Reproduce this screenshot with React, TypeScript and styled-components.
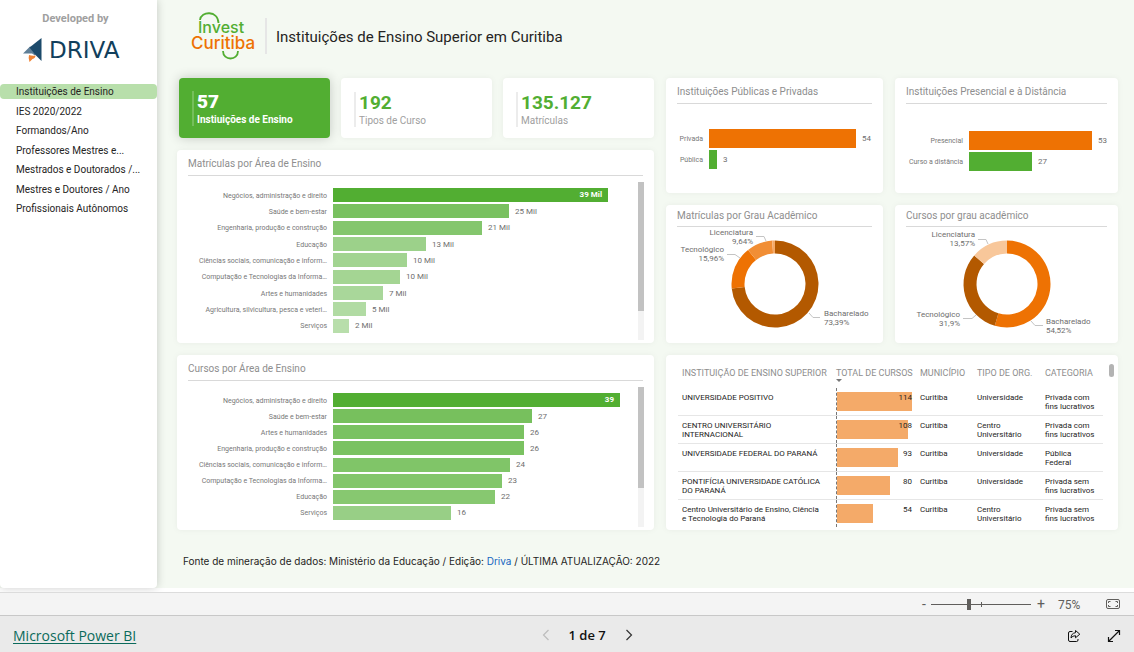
import React from "react";
import styled, { createGlobalStyle } from "styled-components";

const GREEN = "#52ae32";
const ORANGE = "#ee7203";
const BROWN = "#b35900";

const GlobalStyle = createGlobalStyle`
  *, *::before, *::after { box-sizing: border-box; }
  body {
    margin: 0;
    background: #fff;
    color: #252423;
    font-family: Roboto, "Liberation Sans", sans-serif;
    font-size: 10px;
  }
  h1, h2, h3, p, ul { margin: 0; padding: 0; }
  button { font: inherit; color: inherit; background: none; border: 0; padding: 0; cursor: pointer; }
`;

const Page = styled.div`
  display: flex;
  flex-direction: column;
  min-height: 100vh;
`;

const Report = styled.div`
  display: flex;
  flex: 1;
  margin-bottom: 4px;
  background: #f4f9f2;
`;

/* Sidebar */

const Sidebar = styled.aside`
  flex: 0 0 157px;
  background: #fff;
  border-radius: 0 0 4px 4px;
  box-shadow: 0 0 10px rgba(0, 0, 0, 0.2);
`;

const Credit = styled.p`
  padding: 12px 6px 0 0;
  height: 36px;
  line-height: 14px;
  text-align: center;
  font-size: 11px;
  font-weight: 700;
  color: #a0a0a0;
`;

const Brand = styled.div`
  display: flex;
  align-items: center;
  gap: 6px;
  height: 48px;
  padding: 2px 0 22px 23px;
  font-family: "DejaVu Sans", sans-serif;
  font-size: 23px;
  line-height: 24px;
  color: #123f5c;
`;

const Nav = styled.nav`
  display: flex;
  flex-direction: column;
  justify-content: space-between;
  height: 132px;
`;

const NavButton = styled.button<{ $active?: boolean }>`
  height: 15px;
  padding-left: 16px;
  border-radius: 4px;
  text-align: left;
  font-size: 10px;
  line-height: 15px;
  background: ${(p) => (p.$active ? "#b8dfab" : "transparent")};
`;

/* Main area */

const Main = styled.main`
  flex: 1;
  min-width: 0;
  padding: 0 16px 20px 20px;
`;

const Header = styled.header`
  display: flex;
  align-items: center;
  height: 78px;
  padding: 0 0 6px 14px;
`;

const Title = styled.h1`
  margin-left: 7px;
  padding: 2px 0 0 9px;
  border-left: 2px solid #e6e6e6;
  line-height: 34px;
  font-size: 15px;
  font-weight: 400;
`;

const Dashboard = styled.div`
  display: grid;
  grid-template-columns: 477fr 452fr;
  gap: 12px;
`;

const Column = styled.div`
  display: flex;
  flex-direction: column;
  gap: 12px;
`;

const Pair = styled.div`
  display: grid;
  grid-template-columns: 217fr 223fr;
  gap: 12px;
`;

const KpiRow = styled.div`
  display: flex;
  gap: 11px;
  padding-left: 2px;
`;

const Kpi = styled.section<{ $active?: boolean }>`
  display: flex;
  align-items: center;
  flex: 1;
  height: 60px;
  padding: ${(p) => (p.$active ? 0 : 2)}px 0 0 13px;
  border-radius: 4px;
  background: ${(p) => (p.$active ? GREEN : "#fff")};
  color: ${(p) => (p.$active ? "#fff" : "#a0a0a0")};
  box-shadow: 0 0 ${(p) => (p.$active ? "12px rgba(0, 0, 0, 0.2)" : "6px rgba(0, 0, 0, 0.05)")};
`;

const KpiBody = styled.div<{ $active?: boolean }>`
  height: 35px;
  padding-left: 3px;
  border-left: 2px solid ${(p) => (p.$active ? "#75bf5b" : "#ececec")};
  font-size: 10px;
  font-weight: ${(p) => (p.$active ? 700 : 400)};
  line-height: 14px;
`;

const KpiValue = styled.strong<{ $active?: boolean }>`
  display: block;
  font-size: 19px;
  line-height: 22px;
  color: ${(p) => (p.$active ? "#fff" : GREEN)};
`;

const Card = styled.section<{ $height: number }>`
  display: flex;
  flex-direction: column;
  height: ${(p) => p.$height}px;
  padding: 0 11px;
  border-radius: 4px;
  background: #fff;
  box-shadow: 0 0 6px rgba(0, 0, 0, 0.05);
`;

const CardTitle = styled.h2<{ $compact?: boolean }>`
  flex: none;
  height: ${(p) => (p.$compact ? 22 : 26)}px;
  border-bottom: 1px solid #d9d9d9;
  font-size: 10px;
  font-weight: 400;
  line-height: ${(p) => (p.$compact ? 22 : 28)}px;
  color: #8e8e8e;
`;

/* Bar charts */

const ScrollArea = styled.div`
  display: flex;
  flex: 1;
  min-height: 0;
  padding: 6px 0 3px;
  margin-right: -1px;
`;

const Bars = styled.ul`
  display: flex;
  flex-direction: column;
  flex: 1;
  padding: 5px 0 6px;
  list-style: none;
`;

const SmallBars = styled(Bars)<{ $top: number }>`
  flex: none;
  padding: ${(p) => p.$top}px 0 0;
`;

const BarRow = styled.li<{ $row?: number }>`
  display: flex;
  align-items: center;
  flex: ${(p) => (p.$row ? `0 0 ${p.$row}px` : "1")};
  font-size: 8px;
  color: #6e6e6e;
`;

const BarLabel = styled.span<{ $width: number }>`
  flex: 0 0 ${(p) => p.$width}px;
  margin-right: 6px;
  padding-top: 1px;
  text-align: right;
  white-space: nowrap;
  font-size: 7px;
  color: #777;
`;

const Track = styled.div`
  display: flex;
  align-items: center;
  flex: 1;
  gap: 6px;
  white-space: nowrap;
`;

const Bar = styled.div<{ $color: string; $height: number }>`
  flex: none;
  height: ${(p) => p.$height}px;
  padding-right: 6px;
  text-align: right;
  font-weight: 700;
  line-height: ${(p) => p.$height}px;
  color: #fff;
  background: ${(p) => p.$color};
`;

const ScrollTrack = styled.div`
  flex: 0 0 6px;
  background: #f3f3f3;
`;

const ScrollThumb = styled.div<{ $height: number }>`
  height: ${(p) => p.$height}px;
  background: #c2c2c2;
`;

/* Donuts */

const Donut = styled.svg`
  display: block;
  width: calc(100% + 22px);
  height: 115px;
  margin: 0 -11px;
  font-size: 8px;
  fill: #6e6e6e;
`;

/* Table */

const TableCard = styled(Card)`
  flex-direction: row;
  align-items: flex-start;
  padding: 0 4px 0 12px;
`;

const Table = styled.table`
  flex: 1;
  border-collapse: separate;
  border-spacing: 0;
  table-layout: fixed;
  font-size: 8px;
  line-height: 9px;
`;

const Th = styled.th`
  height: 33px;
  padding: 12px 0 0 4px;
  text-align: left;
  vertical-align: top;
  white-space: nowrap;
  font-size: 9px;
  font-weight: 400;
  line-height: 12px;
  color: #8e8e8e;
`;

const SortMark = styled.span`
  display: block;
  width: 0;
  border: 3px solid transparent;
  border-top-color: #777;
`;

const Td = styled.td`
  height: 28px;
  padding: 5px 0 0 4px;
  border-bottom: 1px solid #e6e6e6;
  vertical-align: top;
  white-space: pre-line;
  tr:last-child > & { border-bottom-color: transparent; }
`;

const BarTd = styled(Td)`
  padding: 0 4px;
`;

const CellTrack = styled.div`
  display: grid;
  height: 27px;
  padding: 4px 0;
  border-left: 1px dashed #777;
`;

const CellBar = styled.div`
  grid-area: 1 / 1;
  background: #f4aa69;
`;

const CellValue = styled.span`
  grid-area: 1 / 1;
  padding-top: 1px;
  text-align: right;
`;

const TableScroll = styled.div`
  flex: 0 0 5px;
  height: 13px;
  margin: 9px 0 0 6px;
  border-radius: 3px;
  background: #b3b3b3;
`;

const Source = styled.p`
  padding: 24px 0 0 6px;
  font-family: Inter, Roboto, sans-serif;
  font-size: 10px;
  line-height: 14px;
  a { color: #1565c0; text-decoration: none; }
`;

/* Viewer chrome */

const ZoomBar = styled.div`
  display: flex;
  align-items: center;
  justify-content: flex-end;
  height: 24px;
  padding-right: 13px;
  border-top: 1px solid #dcdcdc;
  border-bottom: 1px solid #c8c8c8;
  background: #f4f4f4;
  font-size: 12px;
  color: #605e5c;
`;

const ZoomButton = styled.button`
  width: 12px;
  font-size: 14px;
  line-height: 20px;
`;

const ZoomRange = styled.input`
  appearance: none;
  width: 100px;
  height: 12px;
  margin: 0 4px 0 1px;
  background:
    linear-gradient(#605e5c, #605e5c) 50px 50% / 1px 5px no-repeat,
    linear-gradient(#605e5c, #605e5c) 0 50% / 100% 1px no-repeat;
  &::-webkit-slider-thumb {
    appearance: none;
    width: 4px;
    height: 11px;
    background: #605e5c;
  }
`;

const ZoomValue = styled.output`
  width: 31px;
  padding-top: 1px;
  margin: 0 16px 0 11px;
`;

const IconButton = styled.button<{ $width: number }>`
  display: flex;
  align-items: center;
  justify-content: center;
  width: ${(p) => p.$width}px;
`;

const Footer = styled.footer`
  display: flex;
  align-items: center;
  justify-content: space-between;
  height: 36px;
  padding-left: 13px;
  background: #eaeaea;
  color: #111;
`;

const PowerLink = styled.a`
  padding-top: 4px;
  font-family: "Open Sans", "Noto Sans", sans-serif;
  font-size: 14px;
  line-height: 20px;
  color: #0b6a5b;
  text-underline-offset: 2px;
`;

const Pager = styled.div`
  display: flex;
  align-items: center;
  padding-top: 2px;
  gap: 13px;
  font-family: "Open Sans", "Noto Sans", sans-serif;
  font-size: 13px;
  font-weight: 600;
  line-height: 18px;
`;

const Actions = styled.div`
  display: flex;
  padding: 3px 0 0 16px;
`;

type Datum = { label: string; text: string; size: number; color: string };

const enrolments: Datum[] = [
  { label: "Negócios, administração e direito", text: "39 Mil", size: 275, color: GREEN },
  { label: "Saúde e bem-estar", text: "25 Mil", size: 176, color: "#79c160" },
  { label: "Engenharia, produção e construção", text: "21 Mil", size: 149, color: "#84c66d" },
  { label: "Educação", text: "13 Mil", size: 93, color: "#9cd18a" },
  { label: "Ciências sociais, comunicação e inform…", text: "10 Mil", size: 74, color: "#a2d491" },
  { label: "Computação e Tecnologias da Informa…", text: "10 Mil", size: 67, color: "#a4d593" },
  { label: "Artes e humanidades", text: "7 Mil", size: 50, color: "#a9d79a" },
  { label: "Agricultura, silvicultura, pesca e veteri…", text: "5 Mil", size: 33, color: "#b1dba3" },
  { label: "Serviços", text: "2 Mil", size: 16, color: "#b8deab" },
];

const courses: Datum[] = [
  { label: "Negócios, administração e direito", text: "39", size: 287, color: GREEN },
  { label: "Saúde e bem-estar", text: "27", size: 199, color: "#77c05d" },
  { label: "Artes e humanidades", text: "26", size: 191, color: "#7ac261" },
  { label: "Engenharia, produção e construção", text: "26", size: 191, color: "#7ac261" },
  { label: "Ciências sociais, comunicação e inform…", text: "24", size: 177, color: "#80c568" },
  { label: "Computação e Tecnologias da Informa…", text: "23", size: 169, color: "#83c66b" },
  { label: "Educação", text: "22", size: 162, color: "#87c870" },
  { label: "Serviços", text: "16", size: 118, color: "#98cf86" },
];

const funding: Datum[] = [
  { label: "Privada", text: "54", size: 147, color: ORANGE },
  { label: "Pública", text: "3", size: 8, color: GREEN },
];

const modality: Datum[] = [
  { label: "Presencial", text: "53", size: 123, color: ORANGE },
  { label: "Curso a distância", text: "27", size: 63, color: GREEN },
];

const institutions = [
  { name: "UNIVERSIDADE POSITIVO", total: 114, type: "Universidade", category: "Privada com\nfins lucrativos" },
  { name: "CENTRO UNIVERSITÁRIO\nINTERNACIONAL", total: 108, type: "Centro\nUniversitário", category: "Privada com\nfins lucrativos" },
  { name: "UNIVERSIDADE FEDERAL DO PARANÁ", total: 93, type: "Universidade", category: "Pública\nFederal" },
  { name: "PONTIFÍCIA UNIVERSIDADE CATÓLICA\nDO PARANÁ", total: 80, type: "Universidade", category: "Privada sem\nfins lucrativos" },
  { name: "Centro Universitário de Ensino, Ciência\ne Tecnologia do Paraná", total: 54, type: "Centro\nUniversitário", category: "Privada sem\nfins lucrativos" },
];

const pages = [
  "Instituições de Ensino",
  "IES 2020/2022",
  "Formandos/Ano",
  "Professores Mestres e...",
  "Mestrados e Doutorados /...",
  "Mestres e Doutores / Ano",
  "Profissionais Autônomos",
];

function AreaChart({ title, data, height, thumb }: { title: string; data: Datum[]; height: number; thumb: number }) {
  return (
    <Card $height={height}>
      <CardTitle>{title}</CardTitle>
      <ScrollArea>
        <Bars>
          {data.map((d, i) => (
            <BarRow key={d.label}>
              <BarLabel $width={139}>{d.label}</BarLabel>
              <Track>
                <Bar $color={d.color} $height={14} style={{ width: `${(d.size / 305) * 100}%` }}>
                  {i === 0 && d.text}
                </Bar>
                {i > 0 && d.text}
              </Track>
            </BarRow>
          ))}
        </Bars>
        <ScrollTrack>
          <ScrollThumb $height={thumb} />
        </ScrollTrack>
      </ScrollArea>
    </Card>
  );
}

function SmallChart({ title, data, label, full, top }: { title: string; data: Datum[]; label: number; full: number; top: number }) {
  return (
    <Card $height={115}>
      <CardTitle>{title}</CardTitle>
      <SmallBars $top={top}>
        {data.map((d) => (
          <BarRow key={d.label} $row={21}>
            <BarLabel $width={label}>{d.label}</BarLabel>
            <Track>
              <Bar $color={d.color} $height={19} style={{ width: `${(d.size / full) * 100}%` }} />
              {d.text}
            </Track>
          </BarRow>
        ))}
      </SmallBars>
    </Card>
  );
}

type Slice = { share: number; color: string };
type Callout = { name: string; value: string; x: number; y: number; end?: boolean; line: string };

function DonutChart({ title, width, cx, slices, callouts }: { title: string; width: number; cx: number; slices: Slice[]; callouts: Callout[] }) {
  const total = slices.reduce((sum, s) => sum + s.share, 0);
  const outer = 43.5;
  const inner = 30.5;
  const cy = 57;
  let from = 0;
  const point = (r: number, t: number) =>
    `${cx + r * Math.sin(t * 2 * Math.PI)} ${cy - r * Math.cos(t * 2 * Math.PI)}`;
  return (
    <Card $height={138}>
      <CardTitle $compact>{title}</CardTitle>
      <Donut viewBox={`0 0 ${width} 115`}>
        {slices.map((s) => {
          const to = from + s.share / total;
          const large = to - from > 0.5 ? 1 : 0;
          const d = `M${point(outer, from)}A${outer} ${outer} 0 ${large} 1 ${point(outer, to)}L${point(inner, to)}A${inner} ${inner} 0 ${large} 0 ${point(inner, from)}Z`;
          from = to;
          return <path key={s.color} d={d} fill={s.color} />;
        })}
        {callouts.map((c) => (
          <g key={c.name}>
            <polyline points={c.line} fill="none" stroke="#c4c4c4" />
            <text textAnchor={c.end ? "end" : "start"} x={c.x} y={c.y}>{c.name}</text>
            <text textAnchor={c.end ? "end" : "start"} x={c.x} y={c.y + 9}>{c.value}</text>
          </g>
        ))}
      </Donut>
    </Card>
  );
}

function DrivaMark() {
  return (
    <svg width="20" height="24" viewBox="0 0 20 24" aria-hidden="true">
      <path d="M0 15.500L7 8.500L14 12L12 17.500L9 15.500Z" fill="#5f7f97" />
      <path d="M6.500 9.500L18.500 0V23L12.500 17Z" fill="#1c4a6b" />
      <path d="M6 17Q9.500 18.200 12.500 17.500Q12.500 20 9.500 21L6.500 24Q5 20 6 17Z" fill="#f08436" />
    </svg>
  );
}

function InvestLogo() {
  return (
    <svg width="67" height="48" viewBox="190 12 67 48" fontFamily="Inter, Roboto, sans-serif" fontWeight="500">
      <path d="M199 20C200 11 217 10 217.500 23" fill="none" stroke={GREEN} strokeWidth="1.800" />
      <path d="M222 51C222 61 237 61 237 51" fill="none" stroke={GREEN} strokeWidth="1.800" />
      <text x="197" y="33" fontSize="16" fill={GREEN}>Invest</text>
      <text x="190" y="49" fontSize="17" fill={ORANGE}>Curitiba</text>
    </svg>
  );
}

export default function App() {
  return (
    <Page>
      <GlobalStyle />
      <Report>
        <Sidebar>
          <Credit>Developed by</Credit>
          <Brand>
            <DrivaMark />
            DRIVA
          </Brand>
          <Nav>
            {pages.map((name, i) => (
              <NavButton key={name} $active={i === 0}>{name}</NavButton>
            ))}
          </Nav>
        </Sidebar>
        <Main>
          <Header>
            <InvestLogo />
            <Title>Instituições de Ensino Superior em Curitiba</Title>
          </Header>
          <Dashboard>
            <Column>
              <KpiRow>
                <Kpi $active>
                  <KpiBody $active><KpiValue $active>57</KpiValue>Instiuições de Ensino</KpiBody>
                </Kpi>
                <Kpi>
                  <KpiBody><KpiValue>192</KpiValue>Tipos de Curso</KpiBody>
                </Kpi>
                <Kpi>
                  <KpiBody><KpiValue>135.127</KpiValue>Matrículas</KpiBody>
                </Kpi>
              </KpiRow>
              <AreaChart title="Matrículas por Área de Ensino" data={enrolments} height={193} thumb={129} />
              <AreaChart title="Cursos por Área de Ensino" data={courses} height={175} thumb={101} />
            </Column>
            <Column>
              <Pair>
                <SmallChart title="Instituições Públicas e Privadas" data={funding} label={26} full={163} top={24} />
                <SmallChart title="Instituições Presencial e à Distância" data={modality} label={57} full={138} top={26} />
              </Pair>
              <Pair>
                <DonutChart
                  title="Matrículas por Grau Acadêmico"
                  width={217}
                  cx={109}
                  slices={[
                    { share: 73.39, color: BROWN },
                    { share: 15.96, color: ORANGE },
                    { share: 9.64, color: "#f18e35" },
                    { share: 1.01, color: "#f4aa69" },
                  ]}
                  callouts={[
                    { name: "Licenciatura", value: "9,64%", x: 87, y: 8, end: true, line: "90,9.5 98,9.5 100,14" },
                    { name: "Tecnológico", value: "15,96%", x: 58, y: 25, end: true, line: "61,27.5 69,27.5 74,31" },
                    { name: "Bacharelado", value: "73,39%", x: 158, y: 89, line: "154,90.5 147,90.5 143,86" },
                  ]}
                />
                <DonutChart
                  title="Cursos por grau acadêmico"
                  width={223}
                  cx={112}
                  slices={[
                    { share: 54.52, color: ORANGE },
                    { share: 31.9, color: BROWN },
                    { share: 13.57, color: "#f8c79a" },
                  ]}
                  callouts={[
                    { name: "Licenciatura", value: "13,57%", x: 80, y: 10, end: true, line: "83,12.5 91,12.5 93,17" },
                    { name: "Tecnológico", value: "31,9%", x: 65, y: 90, end: true, line: "68,91.5 77,91.5 81,88" },
                    { name: "Bacharelado", value: "54,52%", x: 151, y: 97, line: "148,98.5 140,98.5 136,94" },
                  ]}
                />
              </Pair>
              <TableCard $height={175}>
                <Table>
                  <colgroup>
                    <col />
                    <col style={{ width: 84 }} />
                    <col style={{ width: 57 }} />
                    <col style={{ width: 68 }} />
                    <col style={{ width: 62 }} />
                  </colgroup>
                  <thead>
                    <tr>
                      <Th>INSTITUIÇÃO DE ENSINO SUPERIOR</Th>
                      <Th>TOTAL DE CURSOS<SortMark /></Th>
                      <Th>MUNICÍPIO</Th>
                      <Th>TIPO DE ORG.</Th>
                      <Th>CATEGORIA</Th>
                    </tr>
                  </thead>
                  <tbody>
                    {institutions.map((row) => (
                      <tr key={row.name}>
                        <Td>{row.name}</Td>
                        <BarTd>
                          <CellTrack>
                            <CellBar style={{ width: `${(row.total / 114) * 100}%` }} />
                            <CellValue>{row.total}</CellValue>
                          </CellTrack>
                        </BarTd>
                        <Td>Curitiba</Td>
                        <Td>{row.type}</Td>
                        <Td>{row.category}</Td>
                      </tr>
                    ))}
                  </tbody>
                </Table>
                <TableScroll />
              </TableCard>
            </Column>
          </Dashboard>
          <Source>
            Fonte de mineração de dados: Ministério da Educação / Edição: <a href="#driva">Driva</a> / ÚLTIMA ATUALIZAÇÃO: 2022
          </Source>
        </Main>
      </Report>
      <ZoomBar>
        <ZoomButton aria-label="Reduzir">-</ZoomButton>
        <ZoomRange type="range" min={0} max={200} defaultValue={74} aria-label="Zoom" />
        <ZoomButton aria-label="Ampliar">+</ZoomButton>
        <ZoomValue>75%</ZoomValue>
        <IconButton $width={16} aria-label="Ajustar à página">
          <svg width="14" height="12" viewBox="0 0 14 12" fill="none" stroke="#605e5c">
            <rect x="0.5" y="1.500" width="13" height="9" rx="1.500" />
            <path d="M2.500 5V3.500H4.500M9.500 3.500H11.500V5M11.500 7V8.500H9.500M4.500 8.500H2.500V7" />
          </svg>
        </IconButton>
      </ZoomBar>
      <Footer>
        <PowerLink href="#powerbi">Microsoft Power BI</PowerLink>
        <Pager>
          <IconButton $width={20} aria-label="Página anterior" disabled>
            <svg width="8" height="12" viewBox="0 0 8 12" fill="none" stroke="#bdbdbd" strokeWidth="1.200"><path d="M6.500 1L1.500 6L6.500 11" /></svg>
          </IconButton>
          1 de 7
          <IconButton $width={20} aria-label="Próxima página">
            <svg width="8" height="12" viewBox="0 0 8 12" fill="none" stroke="#333" strokeWidth="1.200"><path d="M1.500 1L6.500 6L1.500 11" /></svg>
          </IconButton>
        </Pager>
        <Actions>
          <IconButton $width={40} aria-label="Compartilhar">
            <svg width="14" height="14" viewBox="0 0 14 14" fill="none" stroke="#111" strokeLinejoin="round">
              <path d="M5.500 2.500H3Q1.500 2.500 1.500 4V11Q1.500 12.500 3 12.500H9.500Q11 12.500 11 11V10" />
              <path d="M8.500 1.500L12.800 5.200L8.500 8.800V6.700Q5.500 6.700 4 9Q4.200 4.200 8.500 3.700Z" />
            </svg>
          </IconButton>
          <IconButton $width={40} aria-label="Tela cheia">
            <svg width="14" height="14" viewBox="0 0 14 14" fill="none" stroke="#111" strokeWidth="1.200">
              <path d="M8 1.500H12.500V6M12.500 1.500L1.500 12.500M1.500 8V12.500H6" />
            </svg>
          </IconButton>
        </Actions>
      </Footer>
    </Page>
  );
}
